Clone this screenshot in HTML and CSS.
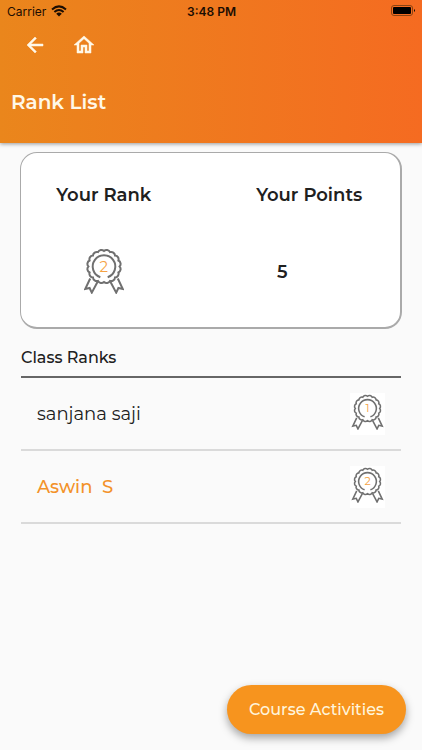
FILE: index.html
```
<!DOCTYPE html>
<html lang="en">

<head>
    <meta charset="UTF-8">
    <meta name="viewport" content="width=device-width, initial-scale=1.0">
    <title>Rank List</title>
    <link rel="stylesheet" href="styles.css">
</head>

<body>
    <!-- shared medal outline -->
    <svg class="defs" aria-hidden="true">
        <symbol id="medal" viewBox="0 0 40 46">
            <path d="M35.6 18.5A3.8 3.8 0 0 1 34.4 24.5A3.8 3.8 0 0 1 31 29.5A3.8 3.8 0 0 1 26 32.9A3.8 3.8 0 0 1 20 34.1A3.8 3.8 0 0 1 14 32.9A3.8 3.8 0 0 1 9 29.5A3.8 3.8 0 0 1 5.6 24.5A3.8 3.8 0 0 1 4.4 18.5A3.8 3.8 0 0 1 5.6 12.5A3.8 3.8 0 0 1 9 7.5A3.8 3.8 0 0 1 14 4.1A3.8 3.8 0 0 1 20 2.9A3.8 3.8 0 0 1 26 4.1A3.8 3.8 0 0 1 31 7.5A3.8 3.8 0 0 1 34.4 12.5A3.8 3.8 0 0 1 35.6 18.5Z" />
            <path d="M16.3 29.2A11.3 11.3 0 1 1 23.7 29.2" />
            <path d="M6.2 30.5L1.2 41L5.6 40L7.8 44.6L13.6 33.8M33.8 30.5L38.8 41L34.4 40L32.2 44.6L26.4 33.8" />
        </symbol>
    </svg>

    <header class="header">
        <div class="status">
            <div class="carrier">
                <span>Carrier</span>
                <svg class="wifi" viewBox="0 0 16 12" aria-hidden="true">
                    <path d="M1 4.4Q8-1.6 15 4.4M3.4 7Q8 3 12.6 7" />
                    <path class="dot" d="M5.2 8.7Q8 6.4 10.8 8.7L8 11.6Z" />
                </svg>
            </div>
            <span class="time">3:48 PM</span>
            <svg class="battery" viewBox="0 0 25 12" aria-hidden="true">
                <rect class="shell" x="0.5" y="0.5" width="21" height="10" rx="2.5" />
                <rect x="2" y="2" width="18" height="7" rx="1" />
                <path d="M23 4Q25 5.5 23 7Z" />
            </svg>
        </div>
        <nav class="nav">
            <button class="icon-btn" aria-label="Back">
                <svg viewBox="0 0 24 24">
                    <path d="M20 11H7.83l5.59-5.59L12 4l-8 8 8 8 1.41-1.41L7.83 13H20v-2z" />
                </svg>
            </button>
            <button class="icon-btn" aria-label="Home">
                <svg viewBox="0 0 24 24">
                    <path d="M12 5.69l5 4.5V18h-2v-6H9v6H7v-7.81l5-4.5M12 3L2 12h3v8h6v-6h2v6h6v-8h3L12 3z" />
                </svg>
            </button>
        </nav>
        <h1>Rank List</h1>
    </header>

    <main>
        <section class="card">
            <div class="stat">
                <h2>Your Rank</h2>
                <div class="medal">
                    <svg><use href="#medal" /></svg>
                    <span>2</span>
                </div>
            </div>
            <div class="stat">
                <h2>Your Points</h2>
                <p class="points">5</p>
            </div>
        </section>

        <section class="class-ranks">
            <h3>Class Ranks</h3>
            <ul>
                <li>
                    <span>sanjana saji</span>
                    <div class="medal small">
                        <svg><use href="#medal" /></svg>
                        <span>1</span>
                    </div>
                </li>
                <li>
                    <span class="me">Aswin&nbsp; S</span>
                    <div class="medal small">
                        <svg><use href="#medal" /></svg>
                        <span>2</span>
                    </div>
                </li>
            </ul>
        </section>
    </main>

    <footer>
        <button class="course-btn">Course Activities</button>
    </footer>
</body>

</html>
```
FILE: styles.css
```
* {
    margin: 0;
    padding: 0;
    box-sizing: border-box;
}

body {
    min-height: 100vh;
    display: flex;
    flex-direction: column;
    background-color: #fafafa;
    color: #202020;
    font-family: Montserrat, Inter, sans-serif;
}

button {
    border: none;
    font-family: inherit;
    cursor: pointer;
}

.defs {
    position: absolute;
    width: 0;
    height: 0;
}

.header {
    padding-bottom: 29px;
    background-image: linear-gradient(90deg, #ea861c, #f56b21);
    box-shadow: 0 1px 4px rgba(0, 0, 0, 0.4);
}

.status {
    display: grid;
    grid-template-columns: 1fr auto 1fr;
    align-items: center;
    height: 22px;
    padding: 0 6px 0 7px;
    color: #1c0d02;
    font-family: Inter, sans-serif;
    font-size: 12px;
}

.carrier {
    display: flex;
    align-items: center;
    gap: 5px;
}

.wifi {
    width: 16px;
    height: 12px;
    fill: none;
    stroke: #1c0d02;
    stroke-width: 2;
}

.wifi .dot {
    fill: #1c0d02;
    stroke: none;
}

.time {
    font-weight: 600;
}

.battery {
    width: 25px;
    height: 12px;
    justify-self: end;
    fill: #000;
}

.battery .shell {
    fill: none;
    stroke: #8a4413;
}

.nav {
    display: flex;
    gap: 25px;
    padding: 11px 23px;
}

.icon-btn {
    width: 24px;
    height: 24px;
    background-color: transparent;
}

.icon-btn svg {
    display: block;
    width: 24px;
    height: 24px;
    fill: #fff8e8;
    stroke: #fff8e8;
    stroke-width: 0.5;
}

h1 {
    margin-top: 22px;
    padding-left: 11px;
    color: #fff8e8;
    font-size: 20px;
    font-weight: 600;
    line-height: 24px;
}

main {
    flex: 1;
    padding: 9px 20px;
}

.card {
    display: grid;
    grid-template-columns: 1fr 1fr;
    height: 177px;
    padding: 30px 0;
    background-color: #fff;
    border: 1px solid #aaa;
    border-right-width: 2px;
    border-bottom-width: 2px;
    border-radius: 17px;
}

.stat {
    display: flex;
    flex-direction: column;
    align-items: center;
    gap: 41px;
}

.stat:first-child {
    padding-right: 24px;
}

.stat:last-child {
    padding-left: 8px;
}

h2 {
    font-size: 18px;
    font-weight: 600;
    line-height: 24px;
}

.medal {
    display: grid;
    place-items: center;
    width: 40px;
    height: 46px;
}

.medal svg {
    grid-area: 1 / 1;
    width: 100%;
    height: 100%;
    fill: none;
    stroke: #707070;
    stroke-width: 2;
}

.medal span {
    grid-area: 1 / 1;
    padding-bottom: 8px;
    color: #f5a243;
    font-size: 15px;
    line-height: 18px;
}

.points {
    padding: 12px 54px 0 0;
    font-size: 18px;
    font-weight: 600;
    line-height: 24px;
}

.class-ranks {
    padding: 0 1px;
}

h3 {
    padding: 17px 0 6px;
    border-bottom: 2px solid #666;
    font-size: 16px;
    font-weight: 500;
    line-height: 24px;
}

ul {
    list-style: none;
}

li {
    display: flex;
    align-items: center;
    justify-content: space-between;
    height: 73px;
    padding: 0 16px;
    border-bottom: 2px solid #dadada;
    font-size: 18px;
    line-height: 24px;
}

.me {
    color: #f3922a;
    font-weight: 500;
}

.small {
    width: 35px;
    height: 42px;
    padding: 1px 1px 5px;
    background-color: #fff;
}

.small span {
    font-size: 11px;
    line-height: 12px;
}

footer {
    position: sticky;
    bottom: 0;
    display: flex;
    justify-content: flex-end;
    padding: 16px;
}

.course-btn {
    height: 49px;
    padding: 0 22px;
    background-color: #f7941e;
    border-radius: 25px;
    box-shadow: 0 4px 8px rgba(0, 0, 0, 0.35);
    color: #fff5dc;
    font-size: 16px;
    font-weight: 500;
}
```
